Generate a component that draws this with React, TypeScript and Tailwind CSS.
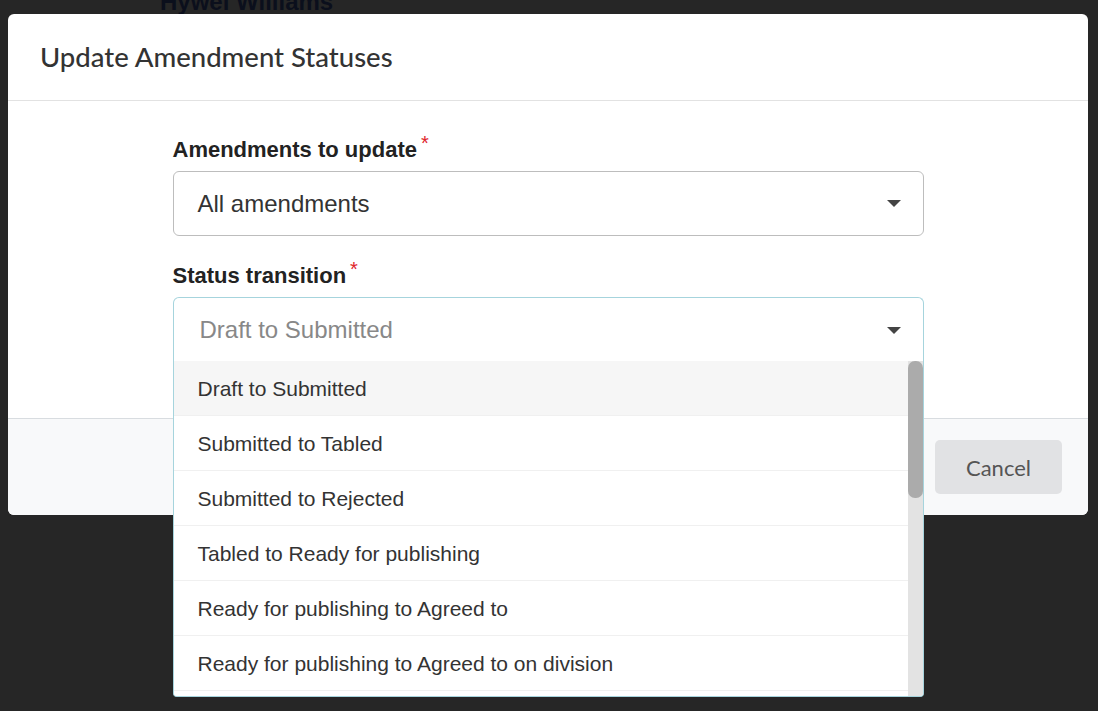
const options = [
  "Draft to Submitted",
  "Submitted to Tabled",
  "Submitted to Rejected",
  "Tabled to Ready for publishing",
  "Ready for publishing to Agreed to",
  "Ready for publishing to Agreed to on division",
];

function Caret() {
  return (
    <svg viewBox="0 0 14 7" className="w-[14px] h-[7px] shrink-0" fill="#444">
      <path d="M0 0h14L7 7z" />
    </svg>
  );
}

function Label({ children }: { children: string }) {
  return (
    <div className="flex items-start h-[26px] mb-[10px] pt-[2px]">
      <span className="text-[22px] leading-[26px] font-bold text-[#222]">{children}</span>
      <span className="ml-[4px] -mt-[4px] text-[20px] leading-[20px] text-[#e0242b]">*</span>
    </div>
  );
}

export default function App() {
  return (
    <div className="relative w-full h-[711px] overflow-hidden bg-[#262626] font-['Liberation_Sans',Arial,sans-serif]">
      <div className="absolute left-[160px] -top-[12px] text-[24px] leading-[28px] font-bold text-[#0b0f1c] underline decoration-wavy decoration-[#4a1010] decoration-1 underline-offset-4">
        Hywel Williams
      </div>

      <div className="absolute inset-0 pt-[14px] pl-[8px]">
        <div className="relative w-[1080px] rounded-[6px] bg-white">
          <div className="h-[87px] flex items-center px-[32px] border-b border-[#e2e2e2]">
            <h2 className="font-['Lato',sans-serif] font-medium text-[27.5px] text-[#333] pb-[1px]">
              Update Amendment Statuses
            </h2>
          </div>

          <div className="pt-[34px] pb-[56px]">
            <div className="w-[751px] mx-auto">
              <Label>Amendments to update</Label>
              <div className="h-[65px] flex items-center justify-between pl-[24px] pr-[22px] border border-[#bdbdbd] rounded-[6px]">
                <span className="text-[24px] text-[#333]">All amendments</span>
                <Caret />
              </div>

              <div className="mt-[25px]">
                <Label>Status transition</Label>
              </div>
              <div className="relative z-10">
                <div className="h-[65px] flex items-center justify-between pl-[26px] pr-[22px] border border-b-0 border-[#a6d4dd] rounded-t-[6px] bg-white">
                  <span className="text-[24px] text-[#888]">Draft to Submitted</span>
                  <Caret />
                </div>
                <div className="absolute left-0 right-0 top-[64px] h-[336px] flex bg-white border border-t-0 border-[#a6d4dd] rounded-b-[4px] overflow-hidden">
                  <div className="flex-1 overflow-hidden">
                    {options.map((o, i) => (
                      <div
                        key={o}
                        className={`h-[55px] flex items-center pl-[24px] pt-[1px] border-b border-[#f0f0f0] text-[21px] text-[#333] ${i === 0 ? "bg-[#f6f6f6]" : "bg-white"}`}
                      >
                        {o}
                      </div>
                    ))}
                    <div className="h-[55px] bg-white" />
                  </div>
                  <div className="w-[15px] bg-[#e3e3e3]">
                    <div className="h-[137px] w-full rounded-[7px] bg-[#ababab]" />
                  </div>
                </div>
              </div>
            </div>
          </div>

          <div className="h-[97px] flex items-center justify-end pr-[26px] bg-[#f8f9fa] border-t border-[#d8dce0] rounded-b-[6px]">
            <button className="h-[54px] w-[127px] rounded-[5px] bg-[#e1e2e4] font-['Lato',sans-serif] text-[22px] text-[#555]">
              Cancel
            </button>
          </div>
        </div>
      </div>
    </div>
  );
}
